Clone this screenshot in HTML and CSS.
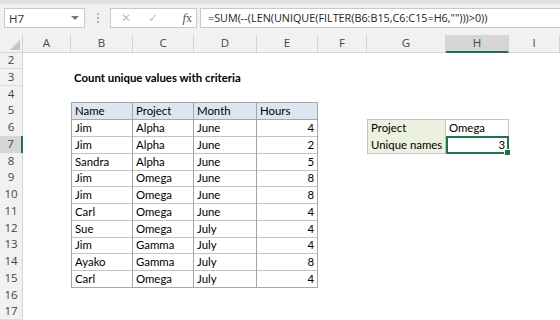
FILE: index.html
```html
<!DOCTYPE html>
<html lang="en">
<head>
    <meta charset="UTF-8">
    <title>Count unique values with criteria</title>
    <link rel="stylesheet" href="styles.css">
</head>
<body>
    <div class="app">
        <div class="toolbar">
            <div class="namebox">
                <span>H7</span>
                <span class="caret"></span>
            </div>
            <div class="grip"><i></i><i></i><i></i></div>
            <div class="fxbox">
                <span class="btn x">&#x2715;</span>
                <span class="btn ok">&#x2713;</span>
                <span class="btn fx"><em>f</em>x</span>
            </div>
            <div class="formula">=SUM(--(LEN(UNIQUE(FILTER(B6:B15,C6:C15=H6,"")))&gt;0))</div>
        </div>

        <div class="sheet">
            <div class="r head">
                <div class="corner"></div>
                <div class="ch">A</div><div class="ch">B</div><div class="ch">C</div><div class="ch">D</div>
                <div class="ch">E</div><div class="ch">F</div><div class="ch">G</div>
                <div class="ch sel">H</div><div class="ch">I</div>
            </div>
            <div class="r"><div class="rh">2</div></div>
            <div class="r"><div class="rh">3</div><div class="c b title">Count unique values with criteria</div></div>
            <div class="r"><div class="rh">4</div></div>
            <div class="r">
                <div class="rh">5</div>
                <div class="c b t th first">Name</div><div class="c t th">Project</div><div class="c t th">Month</div><div class="c t th">Hours</div>
            </div>
            <div class="r">
                <div class="rh">6</div>
                <div class="c b t first">Jim</div><div class="c t">Alpha</div><div class="c t">June</div><div class="c t num">4</div>
                <div class="c g lbl">Project</div><div class="c val">Omega</div>
            </div>
            <div class="r">
                <div class="rh sel">7</div>
                <div class="c b t first">Jim</div><div class="c t">Alpha</div><div class="c t">June</div><div class="c t num">2</div>
                <div class="c g lbl">Unique names</div><div class="c val num active">3<span class="handle"></span></div>
            </div>
            <div class="r">
                <div class="rh">8</div>
                <div class="c b t first">Sandra</div><div class="c t">Alpha</div><div class="c t">June</div><div class="c t num">5</div>
            </div>
            <div class="r">
                <div class="rh">9</div>
                <div class="c b t first">Jim</div><div class="c t">Omega</div><div class="c t">June</div><div class="c t num">8</div>
            </div>
            <div class="r">
                <div class="rh">10</div>
                <div class="c b t first">Jim</div><div class="c t">Omega</div><div class="c t">June</div><div class="c t num">8</div>
            </div>
            <div class="r">
                <div class="rh">11</div>
                <div class="c b t first">Carl</div><div class="c t">Omega</div><div class="c t">June</div><div class="c t num">4</div>
            </div>
            <div class="r">
                <div class="rh">12</div>
                <div class="c b t first">Sue</div><div class="c t">Omega</div><div class="c t">July</div><div class="c t num">4</div>
            </div>
            <div class="r">
                <div class="rh">13</div>
                <div class="c b t first">Jim</div><div class="c t">Gamma</div><div class="c t">July</div><div class="c t num">4</div>
            </div>
            <div class="r">
                <div class="rh">14</div>
                <div class="c b t first">Ayako</div><div class="c t">Gamma</div><div class="c t">July</div><div class="c t num">8</div>
            </div>
            <div class="r">
                <div class="rh">15</div>
                <div class="c b t first last">Carl</div><div class="c t last">Omega</div><div class="c t last">July</div><div class="c t num last">4</div>
            </div>
            <div class="r"><div class="rh">16</div></div>
            <div class="r"><div class="rh">17</div></div>
        </div>
    </div>
</body>
</html>
```

FILE: styles.css
```css
body{
    margin:0;
    padding:0;
    background:#fff;
    font-family: Lato, "Liberation Sans", sans-serif;
    color:#000;
}
.app{
    width:560px;
    height:320px;
    overflow:hidden;
}

/* formula bar */
.toolbar{
    height:35px;
    background:#f1f1f1;
    border-top:4px solid #e1e1e1;
    box-sizing:border-box;
    display:flex;
    align-items:flex-start;
    padding-top:4px;
}
.namebox{
    margin-left:4px;
    width:81px;
    height:20px;
    box-sizing:border-box;
    background:#fff;
    border:1px solid #c8c8c8;
    display:flex;
    align-items:center;
    justify-content:space-between;
    padding:0 5px 0 4px;
    font-family: "Open Sans", sans-serif;
    font-size:11.5px;
    color:#333;
}
.caret{
    width:0;
    height:0;
    border-left:4px solid transparent;
    border-right:4px solid transparent;
    border-top:4px solid #777;
}
.grip{
    width:25px;
    height:20px;
    display:flex;
    flex-direction:column;
    align-items:center;
    justify-content:center;
    gap:2px;
}
.grip i{
    width:2px;
    height:2px;
    background:#b4b4b4;
}
.fxbox{
    width:87px;
    height:20px;
    box-sizing:border-box;
    background:#fff;
    border:1px solid #c8c8c8;
    display:flex;
    align-items:center;
    padding:0 4px 0 10px;
}
.btn{
    color:#c0c0c0;
    font-size:12px;
    font-family: "DejaVu Sans", sans-serif;
    width:27px;
    text-align:left;
}
.btn.fx{
    color:#555;
    font-family: "Liberation Serif", serif;
    font-size:12px;
    width:auto;
    margin-left:auto;
}
.btn.fx em{
    font-style:italic;
    font-size:13px;
}
.formula{
    margin-left:3px;
    flex:1;
    height:20px;
    box-sizing:border-box;
    background:#fff;
    border:1px solid #c8c8c8;
    border-right:none;
    padding:0 0 0 7px;
    line-height:18px;
    font-family: "Open Sans", sans-serif;
    font-size:10.8px;
    color:#222;
    white-space:nowrap;
}

/* grid */
.r{
    display:grid;
    grid-template-columns:23px 48px 62px 61px 63px 61px 49px 79px 63px 51px;
    height:16.75px;
    font-size:11.4px;
}
.r.head{
    height:17px;
    background:#f1f1f1;
}
.corner{
    border-right:1px solid #d4d4d4;
    border-bottom:1px solid #d4d4d4;
    position:relative;
}
.corner::after{
    content:"";
    position:absolute;
    right:2px;
    bottom:2px;
    border-left:10px solid transparent;
    border-bottom:10px solid #c6c6c6;
}
.ch{
    border-right:1px solid #d4d4d4;
    border-bottom:1px solid #d4d4d4;
    text-align:center;
    line-height:16px;
    color:#444;
    font-family: "Open Sans", sans-serif;
    font-size:11.5px;
}
.ch.sel{
    background:#d6d6d6;
    border-bottom:2px solid #217346;
    color:#1c5b36;
}
.rh{
    grid-column:1;
    background:#f1f1f1;
    border-right:1px solid #d4d4d4;
    border-bottom:1px solid #dcdcdc;
    text-align:center;
    line-height:16px;
    color:#444;
    font-family: "Open Sans", sans-serif;
    font-size:11.5px;
}
.rh.sel{
    background:#d6d6d6;
    border-right:2px solid #217346;
    color:#1c5b36;
}
.c{
    padding:1px 3px 0;
    line-height:16px;
    white-space:nowrap;
    box-sizing:border-box;
}
.b{grid-column:3;}
.title{
    font-weight:bold;
}
.t{
    border-right:1px solid #a6a6a6;
    border-bottom:1px solid #c4c4c4;
}
.t.first{
    border-left:1px solid #a6a6a6;
}
.th{
    background:#dce6f1;
    border-top:1px solid #a6a6a6;
    border-bottom:1px solid #a6a6a6;
    padding-top:0;
}
.t.last{
    border-bottom:1px solid #a6a6a6;
}
.num{
    text-align:right;
}
.g{grid-column:8;}
.lbl{
    background:#ebf1de;
    border-left:1px solid #c4c4c4;
    border-bottom:1px solid #c4c4c4;
    border-right:1px solid #c4c4c4;
}
.r:nth-child(6) .lbl,
.r:nth-child(6) .val{
    border-top:1px solid #c4c4c4;
    padding-top:0;
}
.val{
    border-right:1px solid #c4c4c4;
    border-bottom:1px solid #c4c4c4;
}
.val.active{
    border:2px solid #217346;
    line-height:14px;
    padding:0 2px 0 3px;
    position:relative;
}
.handle{
    position:absolute;
    right:-4px;
    bottom:-4px;
    width:5px;
    height:5px;
    background:#217346;
    border:1px solid #fff;
}
```
